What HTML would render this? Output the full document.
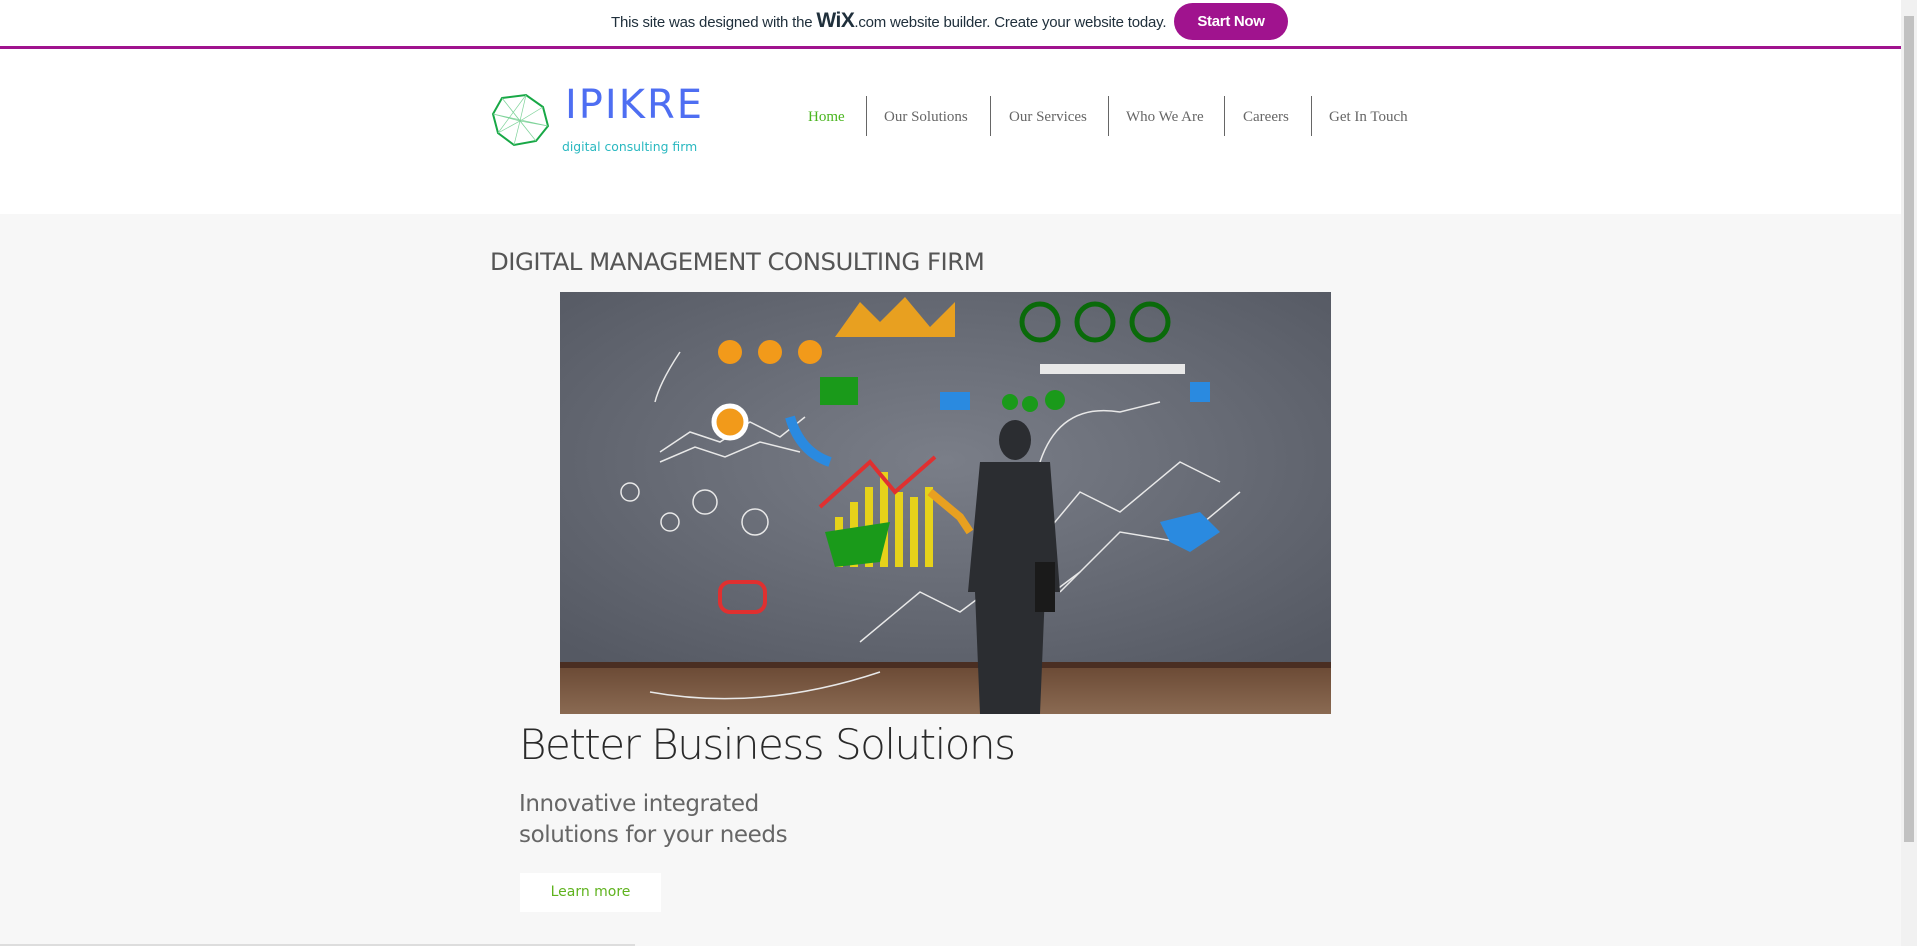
<!DOCTYPE html>
<html><head><meta charset="utf-8"><style>
*{margin:0;padding:0;box-sizing:border-box}
body{width:1917px;height:946px;overflow:hidden;background:#f7f7f7;font-family:"Liberation Sans",sans-serif;position:relative}
.ban{position:absolute;left:0;top:0;width:1901px;height:46px;background:#fff}
.line{position:absolute;left:0;top:46px;width:1901px;height:3px;background:#a0138e}
.btxt{position:absolute;left:611px;top:9px;font-size:15px;color:#20303c;white-space:nowrap;letter-spacing:-0.2px}
.btxt b{font-size:21px;font-weight:bold;letter-spacing:-0.5px}
.sbtn{position:absolute;left:1174px;top:3px;width:114px;height:37px;border-radius:19px;background:#a0138e;color:#fff;font-weight:bold;font-size:15px;text-align:center;line-height:37px;letter-spacing:-0.3px}
.hdr{position:absolute;left:0;top:49px;width:1901px;height:165px;background:#fff}
.logo{position:absolute;left:565px;top:82px;font-size:40px;color:#4e6ef2;letter-spacing:2px;font-family:"DejaVu Sans",sans-serif;font-weight:500}
.tag{position:absolute;left:562px;top:139px;font-size:12.4px;color:#29b8c0;font-family:"DejaVu Sans",sans-serif}
.nav{position:absolute;top:109px;font-family:"Liberation Serif",serif;font-size:15px;color:#666}
.sep{position:absolute;top:96px;width:1px;height:40px;background:#666}
.scroll{position:absolute;right:0;top:0;width:16px;height:946px;background:#f1f1f1}
.scroll div{position:absolute;left:3px;top:16px;width:10px;height:826px;background:#c1c1c1}
h1{position:absolute;left:490px;top:247px;font-weight:normal;font-size:24.4px;color:#555;font-family:"DejaVu Sans",sans-serif;letter-spacing:-0.5px}
.pic{position:absolute;left:560px;top:292px;width:771px;height:422px}
.bbs{position:absolute;left:519px;top:720px;font-size:42px;color:#2a2a2a;font-family:"DejaVu Sans",sans-serif;font-weight:300;letter-spacing:-1.5px}
.sub{position:absolute;left:519px;top:789px;font-size:23px;line-height:31px;color:#666;font-family:"DejaVu Sans",sans-serif;letter-spacing:-0.4px}
.lm{position:absolute;left:520px;top:873px;width:141px;height:39px;background:#fff;color:#5fb31e;font-size:14px;text-align:center;line-height:39px;font-family:"DejaVu Sans",sans-serif}
.bot{position:absolute;left:0;top:944px;width:635px;height:2px;background:#ddd}
</style></head><body>
<div class="ban"></div>
<div class="btxt">This site was designed with the <b>WiX</b>.com website builder. Create your website today.</div>
<div class="sbtn">Start Now</div>
<div class="line"></div>
<div class="hdr"></div>
<svg style="position:absolute;left:490px;top:92px" width="62" height="56" viewBox="0 0 62 56">
<polygon points="12,6 36,3 53,15 58,34 46,49 24,53 8,41 3,22" fill="none" stroke="#18a846" stroke-width="2"/>
<g stroke="#7fd39a" stroke-width="0.7" fill="none"><path d="M12,6 L30,29 L53,15 M36,3 L30,29 L58,34 M3,22 L30,29 L24,53 M8,41 L30,29 L46,49 M12,6 L46,49 M36,3 L8,41 M3,22 L58,34"/></g>
</svg>
<div class="logo">IPIKRE</div>
<div class="tag">digital consulting firm</div>
<div class="nav" style="left:808px;color:#4ab51f">Home</div>
<div class="sep" style="left:866px"></div>
<div class="nav" style="left:884px">Our Solutions</div>
<div class="sep" style="left:990px"></div>
<div class="nav" style="left:1009px">Our Services</div>
<div class="sep" style="left:1108px"></div>
<div class="nav" style="left:1126px">Who We Are</div>
<div class="sep" style="left:1224px"></div>
<div class="nav" style="left:1243px">Careers</div>
<div class="sep" style="left:1311px"></div>
<div class="nav" style="left:1329px">Get In Touch</div>
<div class="scroll"><div></div></div>
<h1>DIGITAL MANAGEMENT CONSULTING FIRM</h1>
<svg class="pic" viewBox="0 0 771 422">
<defs><radialGradient id="w" cx="50%" cy="45%" r="70%"><stop offset="0" stop-color="#7a7e88"/><stop offset="1" stop-color="#555963"/></radialGradient>
<linearGradient id="f" x1="0" y1="0" x2="0" y2="1"><stop offset="0" stop-color="#6b4a35"/><stop offset="1" stop-color="#8a6a52"/></linearGradient></defs>
<rect width="771" height="374" fill="url(#w)"/>
<rect y="374" width="771" height="48" fill="url(#f)"/>
<rect y="370" width="771" height="6" fill="#4a2e22"/>
<g fill="none" stroke="#e8e8e8" stroke-width="1.5">
<path d="M100,160 L130,140 L160,150 L190,130 L220,145 L245,125"/><path d="M100,170 L135,155 L165,165 L200,150 L240,160"/>
<path d="M300,350 L360,300 L400,320 L440,290 L480,310 L520,280"/><path d="M90,400 Q200,420 320,380"/>
<path d="M470,260 L520,200 L560,220 L620,170 L660,190"/><path d="M500,300 L560,240 L620,250 L680,200"/>
<circle cx="70" cy="200" r="9"/><circle cx="110" cy="230" r="9"/><circle cx="145" cy="210" r="12"/><circle cx="195" cy="230" r="13"/>
<path d="M480,170 Q500,110 560,120 L600,110"/><path d="M120,60 Q100,90 95,110"/>
</g>
<g fill="#f29a1a"><circle cx="170" cy="60" r="12"/><circle cx="210" cy="60" r="12"/><circle cx="250" cy="60" r="12"/><circle cx="170" cy="130" r="16" stroke="#fff" stroke-width="5"/></g>
<polygon points="275,45 300,10 320,30 345,5 370,35 395,10 395,45" fill="#e8a020"/>
<rect x="260" y="85" width="38" height="28" fill="#1a9a1a"/>
<g stroke="#0a6a0a" stroke-width="5" fill="none"><circle cx="480" cy="30" r="18"/><circle cx="535" cy="30" r="18"/><circle cx="590" cy="30" r="18"/></g>
<rect x="480" y="72" width="145" height="10" fill="#e8e8e8"/>
<g fill="#e6d21a"><rect x="275" y="225" width="8" height="50"/><rect x="290" y="210" width="8" height="65"/><rect x="305" y="195" width="8" height="80"/><rect x="320" y="180" width="8" height="95"/><rect x="335" y="200" width="8" height="75"/><rect x="350" y="205" width="8" height="70"/><rect x="365" y="195" width="8" height="80"/></g>
<path d="M260,215 L310,170 L335,200 L375,165" stroke="#e03030" stroke-width="4" fill="none"/>
<path d="M230,125 Q240,160 270,170" stroke="#2a8ae0" stroke-width="10" fill="none"/>
<g fill="#2a8ae0"><rect x="380" y="100" width="30" height="18"/><rect x="630" y="90" width="20" height="20"/><path d="M600,230 L640,220 L660,240 L630,260 L610,250Z"/></g>
<g fill="#1a9a1a"><circle cx="450" cy="110" r="8"/><circle cx="470" cy="112" r="8"/><circle cx="495" cy="108" r="10"/><path d="M265,240 L330,230 L320,270 L275,275Z"/></g>
<rect x="160" y="290" width="45" height="30" rx="10" fill="none" stroke="#e03030" stroke-width="4"/>
<path d="M370,200 L400,225 L410,240" stroke="#e8a020" stroke-width="8" fill="none"/>
<g fill="#2b2d31"><ellipse cx="455" cy="148" rx="16" ry="20"/><path d="M420,170 L490,170 L500,300 L485,300 L480,422 L420,422 L415,300 L408,300Z"/><rect x="475" y="270" width="20" height="50" fill="#1a1a1a"/></g>
</svg>
<div class="bbs">Better Business Solutions</div>
<div class="sub">Innovative integrated<br>solutions for your needs</div>
<div class="lm">Learn more</div>
<div class="bot"></div>
</body></html>
